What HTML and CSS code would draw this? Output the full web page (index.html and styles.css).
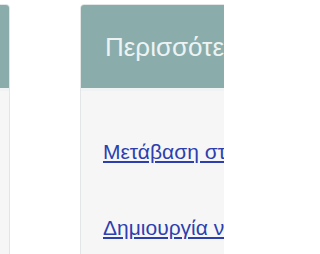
FILE: index.html
```html
<!DOCTYPE html>
<html lang="el">
<head>
<meta charset="utf-8">
<link rel="stylesheet" href="styles.css">
</head>
<body>
<div class="viewport">
  <div class="row">
    <div class="panel panel-left">
      <div class="panel-heading">Πληροφορίες</div>
      <div class="panel-body"></div>
    </div>
    <div class="panel panel-right">
      <div class="panel-heading">Περισσότερες επιλογές</div>
      <div class="panel-body">
        <a class="link" href="#">Μετάβαση στη σελίδα</a>
        <a class="link" href="#">Δημιουργία νέου λογαριασμού</a>
      </div>
    </div>
  </div>
</div>
</body>
</html>
```
FILE: styles.css
```css
html, body {
  margin: 0;
  padding: 0;
  background: #ffffff;
}
body {
  font-family: "Liberation Sans", Arial, sans-serif;
}
.viewport {
  width: 224px;
  height: 254px;
  overflow: hidden;
}
.row {
  display: flex;
  gap: 70px;
  margin-left: -190px;
  padding-top: 4px;
}
.panel {
  flex: 0 0 auto;
  border: 1px solid #e2e6e6;
  border-radius: 4px 4px 0 0;
  background: #f6f6f6;
  height: 300px;
}
.panel-left { width: 198px; }
.panel-right { width: 340px; }
.panel-heading {
  background: #8aadac;
  color: #edf3f3;
  font-size: 26px;
  line-height: 30px;
  padding: 27px 0 26px 24px;
  white-space: nowrap;
  overflow: hidden;
  border-radius: 3px 3px 0 0;
  border-bottom: 3px solid #f0f3f3;
}
.panel-body {
  padding: 49px 0 0 22px;
  display: flex;
  flex-direction: column;
  gap: 52px;
}
.link {
  display: block;
  font-size: 21px;
  line-height: 24px;
  color: #2d3fae;
  text-decoration: underline;
  white-space: nowrap;
}
```
